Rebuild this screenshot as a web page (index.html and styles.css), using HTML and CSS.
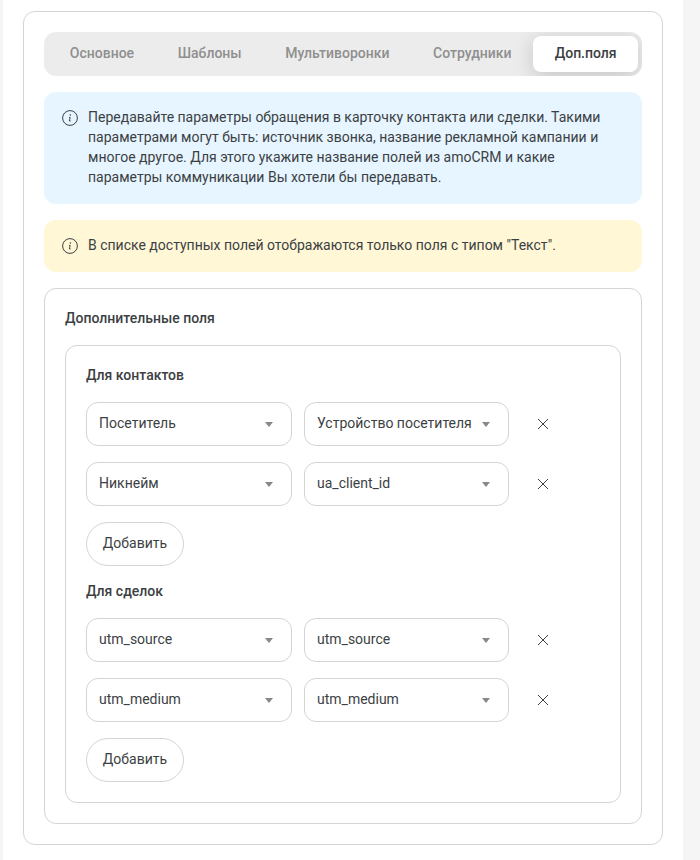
FILE: index.html
```html
<!DOCTYPE html>
<html lang="ru">
<head>
<meta charset="utf-8">
<title>Доп.поля</title>
<link rel="stylesheet" href="styles.css">
</head>
<body>
<svg class="defs" width="0" height="0">
  <symbol id="info" viewBox="0 0 16 16"><circle cx="8" cy="8" r="7.4" fill="none" stroke="currentColor"/><circle cx="8.4" cy="5" r=".75" fill="currentColor"/><path d="M7 7.4h1.2l-.8 3.5h1.3" fill="none" stroke="currentColor" stroke-width=".95"/></symbol>
  <symbol id="close" viewBox="0 0 12 12"><path d="M1 1l10 10M11 1L1 11" fill="none" stroke="currentColor"/></symbol>
  <symbol id="arrow" viewBox="0 0 8 5"><path d="M0 0h8L4 5z" fill="#888"/></symbol>
</svg>
<main class="page">
  <section class="card">
    <nav class="tabs">
      <a class="tab">Основное</a>
      <a class="tab">Шаблоны</a>
      <a class="tab">Мультиворонки</a>
      <a class="tab">Сотрудники</a>
      <a class="tab active">Доп.поля</a>
    </nav>
    <div class="alert blue">
      <svg class="info"><use href="#info"/></svg>
      <p>Передавайте параметры обращения в карточку контакта или сделки. Такими<br>параметрами могут быть: источник звонка, название рекламной кампании и<br>многое другое. Для этого укажите название полей из amoCRM и какие<br>параметры коммуникации Вы хотели бы передавать.</p>
    </div>
    <div class="alert yellow">
      <svg class="info"><use href="#info"/></svg>
      <p>В списке доступных полей отображаются только поля с типом "Текст".</p>
    </div>
    <section class="card">
      <h2>Дополнительные поля</h2>
      <section class="card">
        <h3>Для контактов</h3>
        <div class="row">
          <div class="select"><span>Посетитель</span><svg class="arrow"><use href="#arrow"/></svg></div>
          <div class="select"><span>Устройство посетителя</span><svg class="arrow"><use href="#arrow"/></svg></div>
          <svg class="close"><use href="#close"/></svg>
        </div>
        <div class="row">
          <div class="select"><span>Никнейм</span><svg class="arrow"><use href="#arrow"/></svg></div>
          <div class="select"><span>ua_client_id</span><svg class="arrow"><use href="#arrow"/></svg></div>
          <svg class="close"><use href="#close"/></svg>
        </div>
        <button class="add">Добавить</button>
        <h3>Для сделок</h3>
        <div class="row">
          <div class="select"><span>utm_source</span><svg class="arrow"><use href="#arrow"/></svg></div>
          <div class="select"><span>utm_source</span><svg class="arrow"><use href="#arrow"/></svg></div>
          <svg class="close"><use href="#close"/></svg>
        </div>
        <div class="row">
          <div class="select"><span>utm_medium</span><svg class="arrow"><use href="#arrow"/></svg></div>
          <div class="select"><span>utm_medium</span><svg class="arrow"><use href="#arrow"/></svg></div>
          <svg class="close"><use href="#close"/></svg>
        </div>
        <button class="add">Добавить</button>
      </section>
    </section>
  </section>
</main>
</body>
</html>
```

FILE: styles.css
```css
* { box-sizing: border-box; }

body {
  margin: 0;
  background: #f5f5f5;
  color: #3c3f43;
  font: 14px/20px Roboto, "Liberation Sans", sans-serif;
}

.defs { display: none; }

.page {
  width: 680px;
  min-height: 860px;
  margin-left: 3px;
  padding: 11px 20px 15px;
  background: #fff;
}

.card {
  display: flex;
  flex-direction: column;
  gap: 16px;
  padding: 20px;
  border: 1px solid #d4d4d4;
  border-radius: 12px;
}

h2, h3, p { margin: 0; }

h2, h3 {
  margin: -1px 0 1px;
  font-size: 14px;
  font-weight: 500;
  line-height: 20px;
}

.tabs {
  display: flex;
  height: 44px;
  padding: 4px;
  overflow: hidden;
  background: #ececec;
  border-radius: 12px;
}

.tab {
  padding: 0 21.8px;
  color: #8f8f8f;
  font-weight: 500;
  line-height: 35px;
  white-space: nowrap;
}

.tab.active {
  flex: 1;
  padding: 0;
  text-align: center;
  color: #3c3f43;
  background: #fff;
  border-radius: 8px;
  box-shadow: 0 4px 20px rgba(0, 0, 0, 0.17);
}

.alert {
  display: flex;
  gap: 10px;
  padding: 15px 18px 17px;
  border-radius: 12px;
}

.alert p { white-space: nowrap; }
.blue { background: #e6f5ff; }
.yellow { background: #fff7d6; }

.info {
  flex: none;
  width: 16px;
  height: 16px;
  margin-top: 3px;
}

.row {
  display: grid;
  grid-template-columns: 206px 205px 12px;
  column-gap: 12px;
  align-items: center;
}

.select {
  display: flex;
  align-items: center;
  justify-content: space-between;
  height: 44px;
  padding: 0 18px 0 12px;
  border: 1px solid #d4d4d4;
  border-radius: 12px;
}

.select span {
  padding-bottom: 2px;
  white-space: nowrap;
}

.arrow { width: 8px; height: 5px; }

.close {
  width: 12px;
  height: 12px;
  margin-left: 16px;
}

.add {
  align-self: flex-start;
  width: 98px;
  height: 44px;
  padding: 0 0 2px;
  color: inherit;
  font: inherit;
  background: #fff;
  border: 1px solid #d4d4d4;
  border-radius: 22px;
}
```
